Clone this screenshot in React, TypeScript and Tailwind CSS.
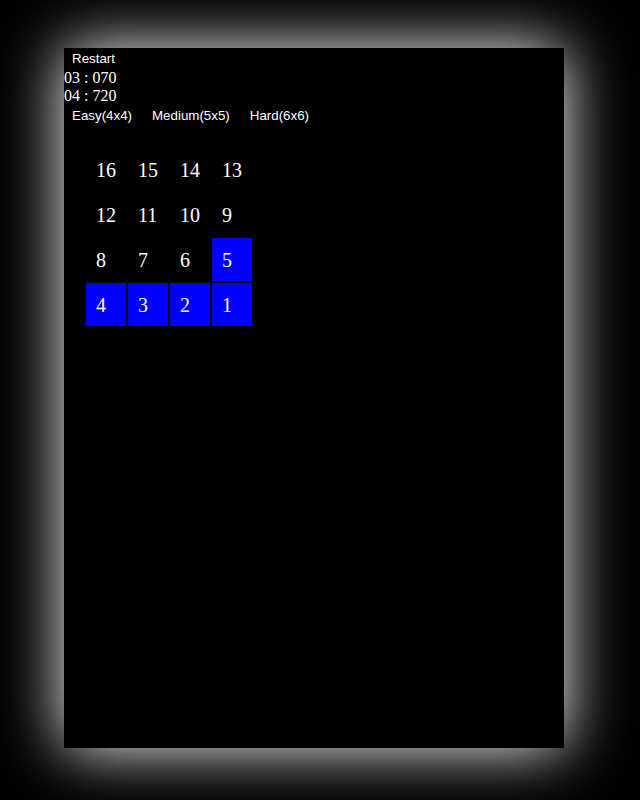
const cells = [16, 15, 14, 13, 12, 11, 10, 9, 8, 7, 6, 5, 4, 3, 2, 1]
const solved = [5, 4, 3, 2, 1]

export default function App() {
  return (
    <div className="min-h-screen w-full overflow-hidden bg-black pt-[48px] pl-[64px]">
      <div className="h-[700px] w-[500px] bg-black text-white shadow-[0_0_60px_white]">
        {/* Controls */}
        <div className="flex h-[20px] items-center">
          <button
            type="button"
            className="ml-[2px] mt-[2px] px-[6px] font-['Liberation_Sans',Arial,sans-serif] text-[13.33px] leading-[16px] text-white"
          >
            Restart
          </button>
        </div>
        <div className="font-['Liberation_Serif','Times_New_Roman',serif] text-[16px] leading-[19px]">
          <div>03 : 070</div>
          <div className="-mt-[1px]">04 : 720</div>
        </div>
        <div className="flex h-[20px] items-center gap-[8px] pt-[1px] font-['Liberation_Sans',Arial,sans-serif] text-[13.33px] leading-[16px]">
          <button type="button" className="ml-[2px] px-[6px]">
            Easy(4x4)
          </button>
          <button type="button" className="px-[6px]">
            Medium(5x5)
          </button>
          <button type="button" className="px-[6px]">
            Hard(6x6)
          </button>
        </div>

        {/* Board */}
        <div className="ml-[22px] mt-[23px] grid w-max grid-cols-[repeat(4,40px)] gap-x-[2px] gap-y-[2px] font-['Liberation_Serif','Times_New_Roman',serif] text-[20px]">
          {cells.map((n) => (
            <div
              key={n}
              className={
                "flex h-[43px] items-center pl-[10px] " +
                (solved.includes(n) ? "bg-[#0000ff]" : "bg-black")
              }
            >
              {n}
            </div>
          ))}
        </div>
      </div>
    </div>
  )
}
